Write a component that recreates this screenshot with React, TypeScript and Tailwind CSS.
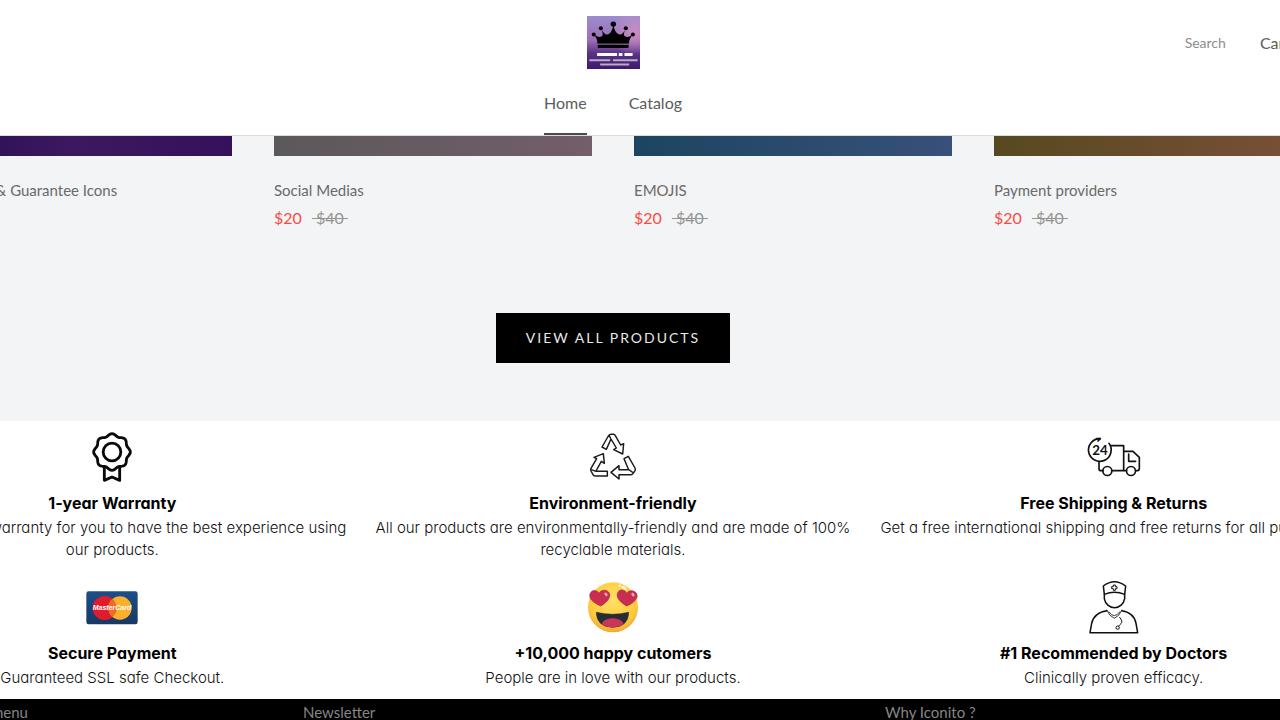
import type { ReactNode } from "react";

type Product = {
  title: string;
  price: string;
  oldPrice: string;
  swatch: string;
};

const products: Product[] = [
  {
    title: "Trust Badge & Guarantee Icons",
    price: "$20",
    oldPrice: "$40",
    swatch: "bg-linear-to-r from-[#250d50] via-[#3c185f] to-[#35115d]",
  },
  {
    title: "Social Medias",
    price: "$20",
    oldPrice: "$40",
    swatch: "bg-linear-to-r from-[#5b585b] to-[#735e6a]",
  },
  {
    title: "EMOJIS",
    price: "$20",
    oldPrice: "$40",
    swatch: "bg-linear-to-r from-[#1b4560] to-[#38507a]",
  },
  {
    title: "Payment providers",
    price: "$20",
    oldPrice: "$40",
    swatch: "bg-linear-to-r from-[#57491f] to-[#7a5038]",
  },
];

type Feature = {
  title: string;
  text: string;
  icon: ReactNode;
};

// Eight-lobed rosette outline
const rosette = Array.from({ length: 120 }, (_, i) => {
  const a = (i / 120) * Math.PI * 2;
  const r = 51.5 + 3.5 * Math.cos(8 * a);
  return `${(96 + r * Math.cos(a)).toFixed(1)},${(81 + r * Math.sin(a)).toFixed(1)}`;
}).join(" ");

function WarrantyIcon() {
  return (
    <svg viewBox="18 18 156 156" className="h-[52px] w-[52px]" fill="none" stroke="#0a0a0a" strokeWidth="8.5" strokeLinejoin="round">
      <polygon points={rosette} />
      <circle cx="96" cy="81" r="26.5" />
      <path d="M73 126V166L96 156L119 166V126" />
    </svg>
  );
}

function RecycleIcon() {
  return (
    <svg viewBox="21 18 156 156" className="h-[52px] w-[52px]" fill="none" stroke="#1a1a1a" strokeWidth="4.4" strokeLinejoin="round">
      <path d="M66 66L85 33Q88 28 94 28H100Q104 28 106 32L122 60L131 56L128 87L101 74L109 69L93 42L79 73ZM93 42L87 31" />
      <path d="M48 138L64 109L73 115L70 86L42 97L50 101L33 130Q31 134 33 138L39 149Q41 153 46 153H82V139H48L34 134" />
      <path d="M93 142L117 122V134H146L132 101L145 94L165 129Q167 133 165 137L159 146Q157 149 152 149H117V162ZM146 134L161 144" />
    </svg>
  );
}

function ShippingIcon() {
  return (
    <svg viewBox="24 18 156 156" className="h-[52px] w-[52px] overflow-visible" fill="none" stroke="#111" strokeWidth="5" strokeLinejoin="round" strokeLinecap="round">
      <path d="M60 41A34 34 0 1 0 87 55" />
      <path d="M50 41H61L54 48" />
      <path d="M94 62H131V137M57 111V131Q57 137 64 137H69M96 137H139M131 79H159L178 97V131Q178 137 168 137" />
      <path d="M146 87V109H167" />
      <circle cx="82" cy="138" r="13.5" />
      <circle cx="153" cy="138" r="13.5" />
      <text x="60" y="90" textAnchor="middle" fontFamily="Lato, sans-serif" fontWeight="700" fontSize="40" fill="#111" stroke="none">
        24
      </text>
    </svg>
  );
}

function CardIcon() {
  return (
    <svg viewBox="19 18 156 156" className="h-[52px] w-[52px]">
      <defs>
        <linearGradient id="card" x1="0" y1="0" x2="0" y2="1">
          <stop offset="0" stopColor="#1c4f89" />
          <stop offset="1" stopColor="#173862" />
        </linearGradient>
        <clipPath id="left-disc">
          <circle cx="75" cy="99" r="36" />
        </clipPath>
      </defs>
      <rect x="20" y="49" width="154" height="99" rx="7" fill="url(#card)" />
      <circle cx="75" cy="99" r="36" fill="#e21b2c" />
      <circle cx="121" cy="99" r="35" fill="#fbb02b" />
      <circle cx="121" cy="99" r="35" fill="#ee6a26" clipPath="url(#left-disc)" />
      <text x="97" y="106" textAnchor="middle" fontFamily="Liberation Sans, sans-serif" fontWeight="700" fontStyle="italic" fontSize="21" fill="#fff">
        MasterCard
      </text>
    </svg>
  );
}

function HeartEyesIcon() {
  const heart = "M0 23C-14 15 -30 5 -30 -9C-30 -26 -9 -30 -2 -15C7 -30 30 -24 30 -8C29 5 13 18 0 23Z";
  return (
    <svg viewBox="21 18 156 156" className="h-[52px] w-[52px]">
      <defs>
        <radialGradient id="face" cx="0.5" cy="0.35" r="0.65">
          <stop offset="0" stopColor="#ffe066" />
          <stop offset="0.75" stopColor="#fdc93f" />
          <stop offset="1" stopColor="#f3a92f" />
        </radialGradient>
        <clipPath id="mouth">
          <path d="M49 112Q98 124 146 112Q145 156 98 157Q50 156 49 112Z" />
        </clipPath>
      </defs>
      <circle cx="99" cy="97" r="75" fill="url(#face)" />
      <path d={heart} transform="translate(60 70) rotate(-4)" fill="#c92e50" stroke="#a9233f" strokeWidth="2" />
      <path d={heart} transform="translate(141 70) rotate(4)" fill="#c92e50" stroke="#a9233f" strokeWidth="2" />
      <ellipse cx="78" cy="58" rx="4" ry="6" fill="#f6a5b4" transform="rotate(-35 78 58)" />
      <ellipse cx="159" cy="59" rx="4" ry="6" fill="#f6a5b4" transform="rotate(-35 159 59)" />
      <path d="M49 112Q98 124 146 112Q145 156 98 157Q50 156 49 112Z" fill="#272d36" stroke="#272d36" strokeWidth="2" strokeLinejoin="round" />
      <ellipse cx="98" cy="147" rx="32" ry="17" fill="#cc3458" clipPath="url(#mouth)" />
      <ellipse cx="132" cy="39" rx="9" ry="5" fill="#fff6cf" transform="rotate(35 132 39)" />
      <circle cx="119" cy="32" r="3.5" fill="#fff6cf" />
    </svg>
  );
}

function DoctorIcon() {
  return (
    <svg viewBox="24 18 156 156" className="h-[52px] w-[52px] overflow-visible" fill="none" stroke="#111" strokeWidth="4.6" strokeLinejoin="round">
      <path d="M73 58L70 33Q103 7 137 33L134 58Q103 45 73 58Z" />
      <path d="M73 58V71A31 33 0 0 0 134 71V58" />
      <path d="M82 107Q42 112 35 145L30 173H173L168 145Q162 112 124 107" />
      <path d="M80 104Q87 123 103 130Q119 123 126 104M86 110Q96 122 103 122T120 110" strokeWidth="2.5" />
      <path d="M118 126Q130 139 123 146Q118 150 115 155" strokeWidth="3" />
      <circle cx="113" cy="158" r="5" strokeWidth="3" />
      <path d="M100 30H106V35H111V41H106V46H100V41H95V35H100Z" strokeWidth="3" />
    </svg>
  );
}

function Logo() {
  return (
    <svg viewBox="51 49 157 157" className="h-[53px] w-[53px]" role="img" aria-label="Iconito">
      <defs>
        <linearGradient id="sky" x1="0" y1="0" x2="0" y2="1">
          <stop offset="0" stopColor="#9b8cd0" />
          <stop offset="0.45" stopColor="#a06fb5" />
          <stop offset="0.7" stopColor="#5b3288" />
          <stop offset="1" stopColor="#3f1a6b" />
        </linearGradient>
        <radialGradient id="glow" cx="0.9" cy="0.3" r="0.45">
          <stop offset="0" stopColor="#cf94c4" stopOpacity="0.8" />
          <stop offset="1" stopColor="#cf94c4" stopOpacity="0" />
        </radialGradient>
      </defs>
      <rect x="51" y="49" width="157" height="157" fill="url(#sky)" />
      <rect x="51" y="49" width="157" height="157" fill="url(#glow)" />
      <path d="M82 131C82 118 77 110 71 104C82 112 93 113 97 107C99 100 95 92 92 86C98 97 104 105 112 104C122 101 127 88 129 74C131 88 137 101 147 104C155 105 161 97 166 86C163 92 159 100 161 107C165 113 177 112 187 104C181 110 176 118 175 131Z" />
      <rect x="83" y="134" width="91" height="10" rx="2" />
      <path d="M84 132H173" stroke="#77518f" strokeWidth="2" />
      <circle cx="129" cy="73" r="8" />
      <circle cx="92" cy="85" r="6" />
      <circle cx="166" cy="85" r="6" />
      <circle cx="71" cy="104" r="6" />
      <circle cx="187" cy="104" r="6" />
      <path d="M81 163H140M145 163H156M162 163H186" stroke="#fff" strokeWidth="9" />
      <path d="M58 180H120M128 180H201M90 193H176" stroke="#b9adc6" strokeWidth="6" />
    </svg>
  );
}

const features: Feature[] = [
  {
    title: "1-year Warranty",
    text: "We offer 1-year warranty for you to have the best experience using our products.",
    icon: <WarrantyIcon />,
  },
  {
    title: "Environment-friendly",
    text: "All our products are environmentally-friendly and are made of 100% recyclable materials.",
    icon: <RecycleIcon />,
  },
  {
    title: "Free Shipping & Returns",
    text: "Get a free international shipping and free returns for all purchases.",
    icon: <ShippingIcon />,
  },
  {
    title: "Secure Payment",
    text: "Guaranteed SSL safe Checkout.",
    icon: <CardIcon />,
  },
  {
    title: "+10,000 happy cutomers",
    text: "People are in love with our products.",
    icon: <HeartEyesIcon />,
  },
  {
    title: "#1 Recommended by Doctors",
    text: "Clinically proven efficacy.",
    icon: <DoctorIcon />,
  },
];

function Header() {
  return (
    <header className="border-b border-[#dcdcdc] bg-white px-[52px] pt-4">
      <div className="grid grid-cols-[1fr_auto_1fr] items-center">
        <span />
        <a href="#">
          <Logo />
        </a>
        <div className="flex items-center justify-end gap-[34px] whitespace-nowrap">
          <a href="#search" className="text-sm text-[#8d8d8d]">
            Search
          </a>
          <a href="#cart" className="text-base text-[#5c5c5c]">
            Cart (0)
          </a>
        </div>
      </div>
      <nav className="mt-1 flex justify-center gap-[42px] text-base text-[#5c5c5c]">
        <a href="#" className="flex h-[62px] items-center border-b-2 border-[#4a4a4a]">
          Home
        </a>
        <a href="#catalog" className="flex h-[62px] items-center border-b-2 border-transparent">
          Catalog
        </a>
      </nav>
    </header>
  );
}

function ProductCard({ title, price, oldPrice, swatch }: Product) {
  return (
    <article>
      <div className={`h-5 ${swatch}`} />
      <h2 className="mt-[22px] text-[15px] leading-6 text-[#6a6a6a]">{title}</h2>
      <p className="mt-1 flex gap-2.5 text-base leading-6">
        <span className="text-[#f94c43]">{price}</span>
        <s className="whitespace-pre text-[#939393]">{`\u00a0${oldPrice}\u00a0`}</s>
      </p>
    </article>
  );
}

export default function App() {
  return (
    <div className="h-screen overflow-hidden bg-black font-[Lato,sans-serif]">
      {/* The page is wider than the window and bleeds off both sides */}
      <div className="-mr-[84px] -ml-[138px]">
        <Header />

        <main>
          <section className="bg-[#f3f4f6] px-[52px] pb-[58px]">
            <div className="grid grid-cols-4 gap-[42px]">
              {products.map((product) => (
                <ProductCard key={product.title} {...product} />
              ))}
            </div>
            <div className="mt-[83px] flex justify-center">
              <button className="h-[50px] bg-black px-[30px] text-sm tracking-[2px] text-[#e8e8e8] uppercase">
                View all products
              </button>
            </div>
          </section>

          <section className="grid grid-cols-3 gap-y-5 bg-white py-2.5 font-[Inter,sans-serif] [font-feature-settings:'cv11']">
            {features.map((feature) => (
              <div key={feature.title} className="flex flex-col items-center px-2 text-center">
                {feature.icon}
                <h3 className="mt-2 text-base leading-6 font-bold text-black">{feature.title}</h3>
                <p className="mt-0.5 text-[15px] leading-[22px] font-light text-[#111]">{feature.text}</p>
              </div>
            ))}
          </section>
        </main>

        <footer className="grid grid-cols-[349fr_582fr_387fr] bg-black px-[92px] pt-px text-[15px] leading-6 text-[#858585]">
          <h4>Main menu</h4>
          <h4>Newsletter</h4>
          <h4>Why Iconito ?</h4>
        </footer>
      </div>
    </div>
  );
}
